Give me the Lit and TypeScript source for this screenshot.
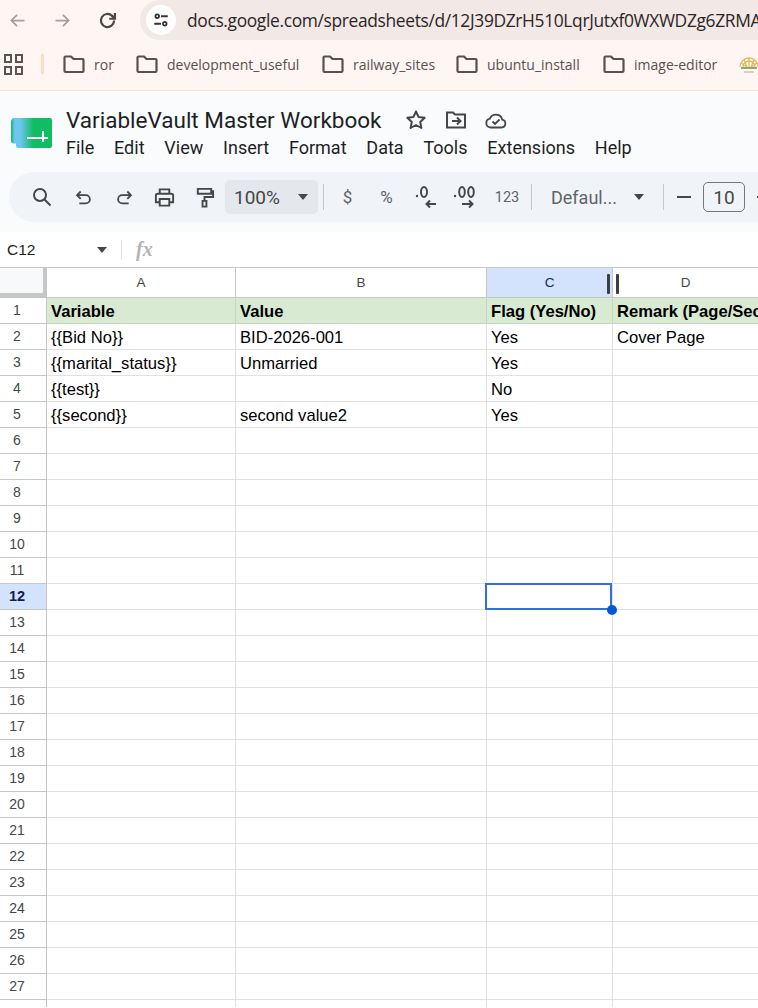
import { LitElement, html, css, svg } from "lit";
import { customElement } from "lit/decorators.js";

const stroke = (body: unknown, size = 24, w = 2) => html`<svg
  width=${size}
  height=${size}
  viewBox="0 0 24 24"
  fill="none"
  stroke="currentColor"
  stroke-width=${w}
>${body}</svg>`;

const folder = stroke(
  svg`<path d="M2.5 5.5a1 1 0 0 1 1-1h5.5l2.5 2.5h9a1 1 0 0 1 1 1v11a1 1 0 0 1-1 1h-17a1 1 0 0 1-1-1z" stroke-linejoin="round"/>`,
  24,
  2.2,
);

const bookmarks = [
  ["ror", 73],
  ["development_useful", 186],
  ["railway_sites", 134],
  ["ubuntu_install", 147],
  ["image-editor", 0],
];

const menus = ["File", "Edit", "View", "Insert", "Format", "Data", "Tools", "Extensions", "Help"];

const cellData: Record<number, string[]> = {
  1: ["Variable", "Value", "Flag (Yes/No)", "Remark (Page/Section)"],
  2: ["{{Bid No}}", "BID-2026-001", "Yes", "Cover Page"],
  3: ["{{marital_status}}", "Unmarried", "Yes", ""],
  4: ["{{test}}", "", "No", ""],
  5: ["{{second}}", "second value2", "Yes", ""],
};

@customElement("app-root")
export class AppRoot extends LitElement {
  static styles = css`
    :host {
      display: block;
      width: 758px;
      height: 1008px;
      overflow: hidden;
      background: #fff;
      color: #1f1f1f;
      font-family: Roboto, sans-serif;
    }
    svg {
      display: block;
      flex: none;
    }

    .nav {
      height: 40px;
      background: #fff5f2;
      display: flex;
      align-items: center;
      color: #4f4542;
    }
    .nav-btn {
      width: 45px;
      flex: none;
      display: flex;
      justify-content: center;
    }
    .nav-btn.off {
      color: #a79f9d;
    }
    .first {
      margin-left: -5px;
    }
    .omnibox {
      margin-left: 10px;
      flex: 1;
      height: 40px;
      min-width: 0;
      border-radius: 20px 0 0 20px;
      background: #f2e8e6;
      display: flex;
      align-items: center;
      padding-left: 6px;
      gap: 11px;
      overflow: hidden;
    }
    .site-info {
      width: 30px;
      height: 30px;
      border-radius: 50%;
      background: #fff;
      flex: none;
      display: flex;
      align-items: center;
      justify-content: center;
      color: #333;
    }
    .url {
      font-family: "Open Sans", sans-serif;
      font-size: 17.4px;
      letter-spacing: -0.02em;
      color: #2b2625;
      white-space: nowrap;
    }

    .bookmarks {
      background: #fff5f2;
      border-bottom: 1px solid #fadfd4;
      display: flex;
      align-items: center;
      padding-left: 3px;
      padding-bottom: 2px;
      height: 48px;
      color: #4f4542;
      overflow: hidden;
    }
    .apps {
      width: 21px;
      height: 21px;
      display: grid;
      grid-template-columns: 8px 8px;
      gap: 3px;
      flex: none;
      margin-left: 1px;
    }
    .apps i {
      border: 2px solid #5c5452;
      box-sizing: border-box;
    }
    .bm-sep {
      width: 3px;
      height: 20px;
      margin: 0 18px 0 16px;
      background: #fddccb;
      flex: none;
    }
    .bm {
      display: flex;
      align-items: center;
      gap: 8px;
      flex: none;
      font-family: "Open Sans", sans-serif;
      font-size: 14px;
      color: #5a514f;
    }
    .bm.sized {
      box-sizing: border-box;
    }
    .emblem {
      margin-left: 20px;
      flex: none;
    }

    .docs {
      height: 141px;
      background: #f9fbfd;
      box-sizing: border-box;
      padding-top: 13px;
    }
    .head {
      display: flex;
      height: 68px;
    }
    .logo {
      margin: 14px 13px 0 11px;
      flex: none;
    }
    .title-row {
      display: flex;
      align-items: center;
      height: 32px;
    }
    .title {
      font-size: 22.5px;
      color: #1f1f1f;
      white-space: nowrap;
      margin-right: 23px;
    }
    .title-row svg {
      color: #444746;
      margin-right: 16px;
    }
    .menus {
      display: flex;
      gap: 19.8px;
      font-size: 18px;
      margin-top: 1px;
      white-space: nowrap;
    }
    .toolbar {
      margin-left: 9px;
      height: 50px;
      border-radius: 25px 0 0 25px;
      background: #f0f4f9;
      display: flex;
      align-items: center;
      color: #444746;
      overflow: hidden;
    }
    .tb {
      flex: none;
      display: flex;
      justify-content: center;
      align-items: center;
      height: 34px;
    }
    .zoom {
      width: 93px;
      height: 34px;
      flex: none;
      box-sizing: border-box;
      background: #e4e8ec;
      border-radius: 5px;
      margin-left: 1px;
      display: flex;
      align-items: center;
      justify-content: space-between;
      padding: 0 10px 0 9px;
      font-size: 19px;
    }
    .caret {
      width: 0;
      height: 0;
      border: 5.5px solid transparent;
      border-top: 6px solid #444746;
      border-bottom: 0;
      flex: none;
    }
    .tb-sep {
      width: 1px;
      height: 26px;
      background: #c7c7c7;
      flex: none;
    }
    .tb-text {
      font-size: 17px;
      color: #5f6368;
    }
    .tb-text.small {
      font-size: 14.5px;
    }
    .font {
      font-size: 18px;
      display: flex;
      align-items: center;
      justify-content: space-between;
      width: 93px;
      margin: 0 19px;
      color: #5f6368;
      flex: none;
    }
    .size {
      width: 42px;
      height: 30px;
      box-sizing: border-box;
      border: 1px solid #747775;
      border-radius: 5px;
      display: flex;
      align-items: center;
      justify-content: center;
      font-size: 19px;
      flex: none;
    }

    .formula {
      height: 35px;
      background: #fff;
      display: flex;
      align-items: center;
      font-family: "Liberation Sans", sans-serif;
      font-size: 15.5px;
      color: #1f1f1f;
    }
    .name-box {
      width: 108px;
      box-sizing: border-box;
      padding-left: 7px;
      padding-right: 1px;
      display: flex;
      justify-content: space-between;
      align-items: center;
      flex: none;
    }
    .fx-sep {
      width: 1px;
      height: 20px;
      background: #e3e3e3;
      margin: 0 14px 0 13px;
      flex: none;
    }
    .fx {
      font-family: "Liberation Serif", serif;
      font-style: italic;
      font-size: 20px;
      color: #b4b4b4;
      font-weight: 700;
    }

    .sheet {
      display: grid;
      grid-template-columns: 47px 189px 251px 126px 1fr;
      grid-template-rows: 30px;
      grid-auto-rows: 26px;
      border-top: 1px solid #c4c7c5;
      font-family: "Liberation Sans", sans-serif;
      overflow: hidden;
      height: 740px;
      box-sizing: border-box;
    }
    .cell {
      box-sizing: border-box;
      border-right: 1px solid #e1e1e1;
      border-bottom: 1px solid #e1e1e1;
      font-size: 16.6px;
      color: #000;
      padding: 3px 0 0 4px;
      white-space: nowrap;
      overflow: hidden;
      line-height: 21px;
      position: relative;
    }
    .cell.last {
      border-right: 0;
    }
    .cell.green {
      background: #d9ead3;
      font-weight: 700;
      border-color: #c5d8bf;
    }
    .cell.selected {
      overflow: visible;
    }
    .selection {
      position: absolute;
      left: -2px;
      top: -1px;
      right: 0;
      bottom: -1px;
      border: 2px solid #2f6fe0;
    }
    .fill-handle {
      position: absolute;
      right: -5px;
      bottom: -6px;
      width: 10px;
      height: 10px;
      border-radius: 50%;
      background: #0b57d0;
      z-index: 2;
    }
    .col-head {
      box-sizing: border-box;
      border-right: 1px solid #c4c7c5;
      border-bottom: 1px solid #c4c7c5;
      display: flex;
      align-items: center;
      justify-content: center;
      font-size: 13.5px;
      color: #444746;
      position: relative;
    }
    .col-head.active {
      background: #d3e3fd;
      color: #0b2a5e;
    }
    .col-head.last {
      border-right: 0;
    }
    .corner {
      background: #f8f9fa;
      border-right: 4px solid #c4c7c5;
      border-bottom: 5px solid #c4c7c5;
      box-sizing: border-box;
    }
    .grip {
      position: absolute;
      top: 6px;
      width: 3px;
      height: 20px;
      border-radius: 1px;
      background: #3c4043;
    }
    .grip.right {
      right: 2px;
    }
    .grip.left {
      left: 3px;
    }
    .row-head {
      box-sizing: border-box;
      border-right: 1px solid #c4c7c5;
      border-bottom: 1px solid #c4c7c5;
      display: flex;
      align-items: center;
      justify-content: center;
      font-size: 14px;
      color: #444746;
      padding: 0 12px 2px 0;
    }
    .row-head.active {
      background: #d3e3fd;
      color: #0a1f4d;
      font-weight: 700;
      font-size: 14.5px;
    }
  `;

  private renderRow(r: number) {
    const data = cellData[r] ?? ["", "", "", ""];
    return html`
      <div class="row-head ${r === 12 ? "active" : ""}">${r}</div>
      ${data.map((v, i) => {
        const selected = r === 12 && i === 2;
        return html`<div
          class="cell ${r === 1 ? "green" : ""} ${i === 3 ? "last" : ""} ${selected ? "selected" : ""}"
        >
          ${v}
          ${selected
            ? html`<div class="selection"></div><div class="fill-handle"></div>`
            : ""}
        </div>`;
      })}
    `;
  }

  render() {
    const rows = Array.from({ length: 28 }, (_, i) => i + 1);
    return html`
      <div class="nav">
        <div class="nav-btn off first">
          ${stroke(svg`<path d="M20 12H5M11.5 5.5 5 12l6.5 6.5"/>`, 21, 2)}
        </div>
        <div class="nav-btn off">
          ${stroke(svg`<path d="M4 12h15M12.5 5.5 19 12l-6.5 6.5"/>`, 21, 2)}
        </div>
        <div class="nav-btn">
          ${stroke(svg`<path d="M19.5 12a7.5 7.5 0 1 1-2.2-5.3L20 9.5M20.5 3.5v6.5H14"/>`, 21, 2.5)}
        </div>
        <div class="omnibox">
          <div class="site-info">
            ${stroke(
              svg`<circle cx="7" cy="7" r="2.4"/><path d="M12 7h9M3 17h9"/><circle cx="17" cy="17" r="2.4"/>`,
              18,
              2.4,
            )}
          </div>
          <div class="url">docs.google.com/spreadsheets/d/12J39DZrH510LqrJutxf0WXWDZg6ZRMA</div>
        </div>
      </div>

      <div class="bookmarks">
        <div class="apps"><i></i><i></i><i></i><i></i></div>
        <div class="bm-sep"></div>
        ${bookmarks.map(
          ([name, w]) =>
            html`<div class="bm sized" style=${w ? `width:${w}px` : ""}>${folder}<span>${name}</span></div>`,
        )}
        <svg class="emblem" width="24" height="24" viewBox="0 0 24 24" fill="none" stroke="#e3b95f" stroke-width="1.3">
          <path d="M3 15a9 9 0 0 1 18 0M6 15a6 6 0 0 1 12 0M12 6v9M7 8l3 7M17 8l-3 7M4 11l6 4M20 11l-6 4" />
          <path d="M4 16h16" stroke="#7fb069" stroke-width="2" />
          <path d="M7 20h10" stroke="#c9b79c" />
        </svg>
      </div>

      <div class="docs">
        <div class="head">
          <svg class="logo" width="42" height="30" viewBox="0 0 42 30">
            <defs>
              <linearGradient id="lg" x1="0" x2="1" y1="0" y2="0">
                <stop offset="0" stop-color="#12b76a" />
                <stop offset="0.09" stop-color="#6cc6f2" />
                <stop offset="0.22" stop-color="#6cc6f2" />
                <stop offset="0.55" stop-color="#0fbd62" />
              </linearGradient>
            </defs>
            <path
              d="M4 0h35a2 2 0 0 1 2 2v26a2 2 0 0 1-2 2H7a2 2 0 0 1-2-2v-2.500H3a3 3 0 0 1-3-3V4a4 4 0 0 1 4-4z"
              fill="url(#lg)"
            />
            <path d="M16 20h21M32 13v11" stroke="#fff" stroke-width="2" fill="none" />
          </svg>
          <div>
            <div class="title-row">
              <span class="title">VariableVault Master Workbook</span>
              ${stroke(
                svg`<path d="m12 3.500 2.600 5.600 6.100.7-4.500 4.200 1.200 6-5.400-3-5.400 3 1.200-6-4.500-4.200 6.100-.7z" stroke-linejoin="round"/>`,
                24,
                2,
              )}
              ${stroke(
                svg`<path d="M3 19.500V4.500h6l2 2h10v13zM8 13h8M13 9.500l3.500 3.500-3.500 3.500"/>`,
                24,
                2,
              )}
              ${stroke(
                svg`<path d="M6.500 19.500a4.500 4.500 0 0 1-.6-8.900 6.500 6.500 0 0 1 12.300 1 4 4 0 0 1-.7 7.900zM8.500 13.500l2.500 2.500 4.500-4.500"/>`,
                24,
                1.8,
              )}
            </div>
            <div class="menus">${menus.map((m) => html`<span>${m}</span>`)}</div>
          </div>
        </div>
        <div class="toolbar">
          <div class="tb" style="width:14px"></div>
          <div class="tb" style="width:38px">
            ${stroke(svg`<circle cx="10" cy="10" r="6"/><path d="m14.500 14.500 6 6"/>`, 24, 2)}
          </div>
          <div class="tb" style="width:44px">
            ${stroke(svg`<path d="M9.500 6 5.500 10l4 4M6 10h9a4.500 4.500 0 0 1 0 9H8"/>`, 22, 2)}
          </div>
          <div class="tb" style="width:39px">
            ${stroke(svg`<path d="M14.500 6l4 4-4 4M18 10H9a4.500 4.500 0 0 0 0 9h7"/>`, 22, 2)}
          </div>
          <div class="tb" style="width:41px">
            ${stroke(
              svg`<path d="M7 8V3.500h10V8M7 17H3v-7a2 2 0 0 1 2-2h14a2 2 0 0 1 2 2v7h-4M7 13.500h10v7H7z"/>`,
              23,
              2,
            )}
          </div>
          <div class="tb" style="width:39px">
            ${stroke(
              svg`<path d="M5 3h14v5H5zM19 5.500h2v6h-9v4M10 15.500h4v6h-4z"/>`,
              23,
              2,
            )}
          </div>
          <div class="zoom"><span>100%</span><div class="caret"></div></div>
          <div class="tb" style="width:5px"></div>
          <div class="tb-sep"></div>
          <div class="tb tb-text" style="width:47px">$</div>
          <div class="tb tb-text" style="width:31px">%</div>
          <div class="tb" style="width:48px">
            <svg width="28" height="28" viewBox="0 0 28 28" fill="currentColor">
              <circle cx="5" cy="13" r="1.200" />
              <ellipse cx="12" cy="9" rx="3" ry="5" fill="none" stroke="currentColor" stroke-width="2" />
              <path d="M24 21H15M18 17.500 14.500 21l3.500 3.500" fill="none" stroke="currentColor" stroke-width="2" />
            </svg>
          </div>
          <div class="tb" style="width:34px">
            <svg width="28" height="28" viewBox="0 0 28 28" fill="currentColor">
              <circle cx="2" cy="13" r="1.200" />
              <ellipse cx="9" cy="9" rx="2.800" ry="5" fill="none" stroke="currentColor" stroke-width="2" />
              <ellipse cx="18" cy="9" rx="2.800" ry="5" fill="none" stroke="currentColor" stroke-width="2" />
              <path d="M9 21h10M16 17.500l3.500 3.500-3.500 3.500" fill="none" stroke="currentColor" stroke-width="2" />
            </svg>
          </div>
          <div class="tb tb-text small" style="width:46px">123</div>
          <div class="tb" style="width:1px"></div>
          <div class="tb-sep"></div>
          <div class="font"><span>Defaul...</span><div class="caret"></div></div>
          <div class="tb-sep"></div>
          <div class="tb" style="width:39px">
            ${stroke(svg`<path d="M5 12h14"/>`, 24, 2)}
          </div>
          <div class="size">10</div>
          <div class="tb" style="width:42px">
            ${stroke(svg`<path d="M3 12h18M12 3v18"/>`, 24, 2)}
          </div>
        </div>
      </div>

      <div class="formula">
        <div class="name-box"><span>C12</span><div class="caret"></div></div>
        <div class="fx-sep"></div>
        <div class="fx">fx</div>
      </div>

      <div class="sheet">
        <div class="corner"></div>
        <div class="col-head">A</div>
        <div class="col-head">B</div>
        <div class="col-head active">C<span class="grip right"></span></div>
        <div class="col-head last">D<span class="grip left"></span></div>
        ${rows.map((r) => this.renderRow(r))}
      </div>
    `;
  }
}
